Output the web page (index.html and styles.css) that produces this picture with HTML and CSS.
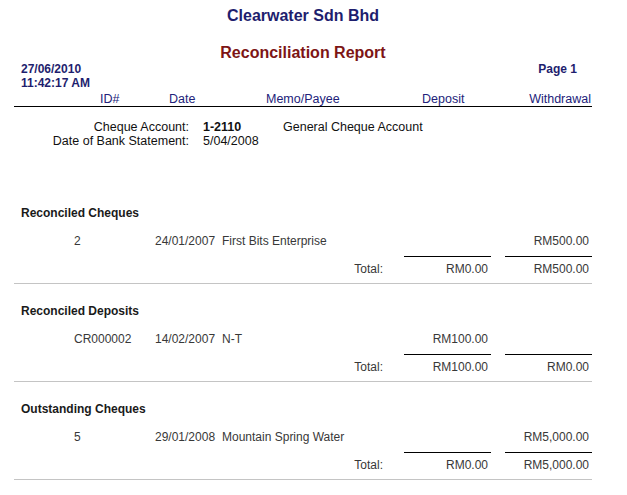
FILE: index.html
```html
<!DOCTYPE html>
<html lang="en">
<head>
<meta charset="utf-8">
<title>Reconciliation Report</title>
<link rel="stylesheet" href="styles.css">
</head>
<body>
<div class="report">
  <header class="head">
    <h1 class="company">Clearwater Sdn Bhd</h1>
    <h2 class="title">Reconciliation Report</h2>
    <div class="meta">
      <div class="stamp">
        <div>27/06/2010</div>
        <div>11:42:17 AM</div>
      </div>
      <div class="page">Page 1</div>
    </div>
    <div class="grid cols">
      <div></div>
      <div class="h-id">ID#</div>
      <div class="h-date">Date</div>
      <div class="h-memo">Memo/Payee</div>
      <div class="h-dep">Deposit</div>
      <div></div>
      <div class="h-wd">Withdrawal</div>
    </div>
  </header>

  <div class="account">
    <div class="lbl">Cheque Account:</div>
    <div class="val strong">1-2110</div>
    <div class="desc">General Cheque Account</div>
    <div class="lbl">Date of Bank Statement:</div>
    <div class="val">5/04/2008</div>
    <div class="desc"></div>
  </div>

  <div class="sections">
    <section class="sect">
      <h3 class="sect-title">Reconciled Cheques</h3>
      <div class="grid row">
        <div></div>
        <div>2</div>
        <div>24/01/2007</div>
        <div>First Bits Enterprise</div>
        <div class="amt"></div>
        <div></div>
        <div class="amt">RM500.00</div>
      </div>
      <div class="grid total">
        <div></div>
        <div></div>
        <div></div>
        <div class="tlabel">Total:</div>
        <div class="amt ruled">RM0.00</div>
        <div></div>
        <div class="amt ruled">RM500.00</div>
      </div>
    </section>

    <section class="sect">
      <h3 class="sect-title">Reconciled Deposits</h3>
      <div class="grid row">
        <div></div>
        <div>CR000002</div>
        <div>14/02/2007</div>
        <div>N-T</div>
        <div class="amt">RM100.00</div>
        <div></div>
        <div class="amt"></div>
      </div>
      <div class="grid total">
        <div></div>
        <div></div>
        <div></div>
        <div class="tlabel">Total:</div>
        <div class="amt ruled">RM100.00</div>
        <div></div>
        <div class="amt ruled">RM0.00</div>
      </div>
    </section>

    <section class="sect">
      <h3 class="sect-title">Outstanding Cheques</h3>
      <div class="grid row">
        <div></div>
        <div>5</div>
        <div>29/01/2008</div>
        <div>Mountain Spring Water</div>
        <div class="amt"></div>
        <div></div>
        <div class="amt">RM5,000.00</div>
      </div>
      <div class="grid total">
        <div></div>
        <div></div>
        <div></div>
        <div class="tlabel">Total:</div>
        <div class="amt ruled">RM0.00</div>
        <div></div>
        <div class="amt ruled">RM5,000.00</div>
      </div>
    </section>
  </div>
</div>
</body>
</html>
```

FILE: styles.css
```css
html, body {
  margin: 0;
  padding: 0;
  background: #ffffff;
}

body {
  font-family: "Liberation Sans", Arial, sans-serif;
  color: #222222;
}

.report {
  width: 578px;
  margin-left: 14px;
  padding-top: 6px;
}

.company {
  margin: 0;
  font-size: 16px;
  line-height: 20px;
  font-weight: bold;
  text-align: center;
  color: #1e1e6e;
}

.title {
  margin: 17px 0 0;
  font-size: 16px;
  line-height: 20px;
  font-weight: bold;
  text-align: center;
  color: #7d1515;
}

.meta {
  display: flex;
  justify-content: space-between;
  align-items: flex-start;
  font-size: 12px;
  line-height: 13.5px;
  font-weight: bold;
  color: #1e1e6e;
}

.stamp {
  padding-left: 7px;
}

.page {
  padding-right: 15px;
}

.grid {
  display: grid;
  grid-template-columns: 60px 81px 67px 182px 87px 14px 87px;
}

.cols {
  margin-top: 2px;
  font-size: 12.5px;
  line-height: 14px;
  color: #22227a;
  border-bottom: 1px solid #000000;
}

.h-id { padding-left: 26px; }
.h-date { padding-left: 14px; }
.h-memo { padding-left: 44px; }
.h-dep { padding-left: 18px; }
.h-wd { text-align: right; padding-right: 1px; }

.account {
  display: grid;
  grid-template-columns: 175px 94px 1fr;
  margin-top: 13px;
  font-size: 12.5px;
  line-height: 14px;
  color: #111111;
}

.lbl { text-align: right; }
.val { padding-left: 14px; }
.strong { font-weight: bold; }

.sections {
  margin-top: 38px;
}

.sect {
  height: 98px;
  padding-top: 20px;
  box-sizing: border-box;
  border-bottom: 1px solid #c4c4c4;
  font-size: 12px;
  line-height: 14px;
}

.sect-title {
  margin: 0;
  padding-left: 7px;
  font-size: 12px;
  line-height: 14px;
  font-weight: bold;
  color: #1a1a1a;
}

.row {
  margin-top: 14px;
  color: #383838;
}

.total {
  margin-top: 8px;
  color: #383838;
}

.total > div {
  border-top: 1px solid transparent;
  padding-top: 4.5px;
}

.total > .ruled {
  border-top-color: #000000;
}

.amt {
  text-align: right;
  padding-right: 3px;
}

.tlabel {
  text-align: right;
  padding-right: 21px;
}
```
